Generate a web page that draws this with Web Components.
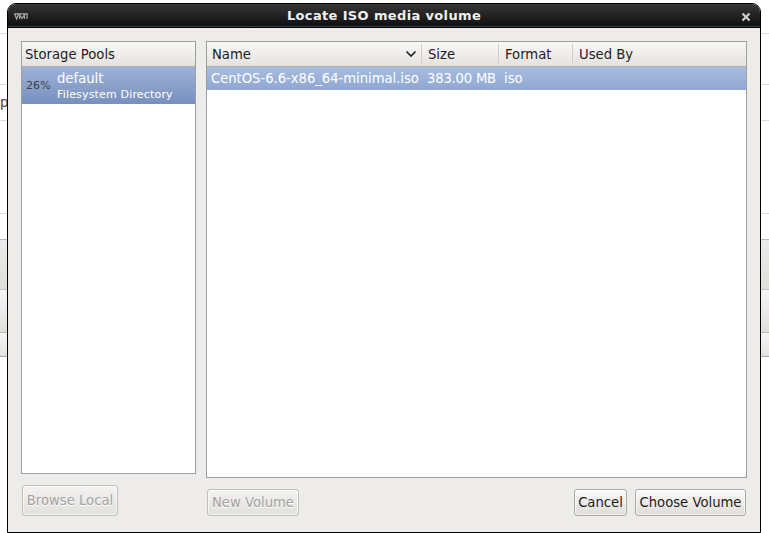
<!DOCTYPE html>
<html><head><meta charset="utf-8">
<style>
html,body{margin:0;padding:0;width:769px;height:533px;overflow:hidden;background:#fff;font-family:"DejaVu Sans",sans-serif}
</style></head><body>
<template id="t-backdrop"><style>
:host{display:block;position:absolute;inset:0;overflow:hidden;background:#fff}
i{position:absolute;left:0;right:0;height:1px;background:#dcdcda}
.b{position:absolute;left:0;right:0;box-sizing:border-box}
span{position:absolute;left:0;top:95px;font:13.2px "DejaVu Sans",sans-serif;color:#444}
</style>
<i style="top:33px"></i><i style="top:84px"></i><i style="top:120px"></i><i style="top:213px"></i>
<div class="b" style="top:239px;height:51px;border-top:1px solid #b8b8b6;border-bottom:1px solid #c4c4c2;background:linear-gradient(#ebebe9,#dfdedb)"></div>
<div class="b" style="top:290px;height:43px;border-bottom:1px solid #b8b8b6;background:linear-gradient(#f6f5f4,#e0dfdc)"></div>
<div class="b" style="top:333px;height:24px;border-bottom:1px solid #a8a8a6;background:linear-gradient(#f6f5f4,#e4e3e0)"></div>
<span>p</span></template>

<template id="t-window"><style>
:host{display:flex;flex-direction:column;position:absolute;left:7px;top:3px;width:754px;height:530px;box-sizing:border-box;border:1px solid #000;border-radius:9px 9px 0 0;background:#edecea;overflow:hidden}
.tb{flex:none;box-sizing:border-box;height:24px;display:flex;align-items:center;justify-content:center;position:relative;background:linear-gradient(#363636,#222 50%,#0e0e0e);border-bottom:1px solid #000;box-shadow:inset 0 -1px 0 #33424f;color:#f0f0f0;font:bold 13px "DejaVu Sans",sans-serif;letter-spacing:.36px}
.ic{position:absolute;left:6px;top:9px;filter:blur(.35px)}
.x{position:absolute;right:9px;top:8px}
.body{flex:1;min-height:0}
</style>
<div class="tb"><svg class="ic" width="14" height="7" viewBox="0 0 14 7"><path d="M0 .8h14M.8 1l1.8 5 1.8-5M5.5 1v5M5.5 1.5l2.5 4 2.5-4M10.5 1v5M13 1v5" stroke="#a6a6a6" stroke-width="1.2" fill="none"/></svg><slot name="title"></slot>
<svg class="x" width="10" height="10" viewBox="0 0 10 10"><path d="M1.5 1.5l7 7M8.5 1.5l-7 7" stroke="#cfcfcf" stroke-width="2.2"/></svg></div>
<div class="body"><slot></slot></div></template>

<template id="t-layout"><style>
:host{display:grid;grid-template-columns:175px 541px;column-gap:10px;padding:13px 0 0 13px;height:100%;box-sizing:border-box}
.l,.r{display:flex;flex-direction:column;min-height:0}
.l{height:433px}.r{height:437px}
.bl{padding:11px 0 0 1px}.br{padding:11px 1px 0 1px;display:flex;justify-content:space-between}
.grp{display:flex;gap:8px}
</style>
<div class="col"><div class="l"><slot name="pools"></slot></div><div class="bl"><slot name="browse"></slot></div></div>
<div class="col"><div class="r"><slot name="vols"></slot></div><div class="br"><slot name="new"></slot><div class="grp"><slot name="actions"></slot></div></div></div></template>

<template id="t-panel"><style>
:host{display:flex;flex-direction:column;height:100%;box-sizing:border-box;border:1px solid #9e9e9c;background:#fff}
</style><slot></slot></template>

<template id="t-head"><style>
:host{display:grid;flex:none;height:25px;box-sizing:border-box;background:linear-gradient(#faf9f8,#e4e2df);border-bottom:1px solid #b0afac;font:13.2px "DejaVu Sans",sans-serif;color:#1c1c1c}
</style><slot></slot></template>

<template id="t-hcell"><style>
:host{display:flex;align-items:center;justify-content:space-between;padding:0 5px 0 6px;box-sizing:border-box;position:relative;white-space:nowrap;height:24px}
:host([sep])::after{content:"";position:absolute;right:0;top:2px;bottom:3px;width:1px;background:#cfcdca}
</style><slot></slot></template>

<template id="t-pool"><style>
:host{display:flex;align-items:center;height:37px;flex:none;background:linear-gradient(#9db2d8,#7890bf);color:#fff;font:13.2px "DejaVu Sans",sans-serif;white-space:nowrap}
.pct{width:35px;padding-left:4px;box-sizing:border-box;font-size:11px;color:#3c3f46;letter-spacing:.1px}
.n{line-height:16px;margin-top:2px}
.s{font-size:11px;line-height:16px;letter-spacing:.17px}
</style><div class="pct"><slot name="pct"></slot></div><div><div class="n"><slot name="name"></slot></div><div class="s"><slot name="sub"></slot></div></div></template>

<template id="t-row"><style>
:host{display:grid;flex:none;height:23px;align-items:center;background:linear-gradient(#a8bcdf,#8fa7d2);color:#fff;font:13.2px "DejaVu Sans",sans-serif;white-space:nowrap}
</style><slot></slot></template>

<template id="t-btn"><style>
:host{display:inline-flex;align-items:center;justify-content:center;box-sizing:border-box;height:27px;border:1px solid #a9a8a5;border-radius:3px;background:linear-gradient(#fbfafa,#dfddda);font:13.2px "DejaVu Sans",sans-serif;color:#1c1c1c;white-space:nowrap;box-shadow:inset 0 0 0 1px rgba(255,255,255,.6)}
:host([disabled]){color:#a3a2a0;border-color:#c0bfbc;text-shadow:0 1px 0 #fff;background:linear-gradient(#f4f3f2,#e2e0dd)}
</style><slot></slot></template>

<x-backdrop></x-backdrop>
<x-window>
 <span slot="title">Locate ISO media volume</span>
 <x-layout>
  <x-panel slot="pools">
   <x-head style="grid-template-columns:1fr"><x-hcell style="padding-left:3px">Storage Pools</x-hcell></x-head>
   <x-pool><span slot="pct">26%</span><span slot="name">default</span><span slot="sub">Filesystem Directory</span></x-pool>
  </x-panel>
  <x-btn slot="browse" disabled style="width:96px;height:31px">Browse Local</x-btn>
  <x-panel slot="vols">
   <x-head style="grid-template-columns:215px 77px 74px 1fr">
    <x-hcell sep style="padding-left:5px">Name<svg width="12" height="8" viewBox="0 0 12 8"><path d="M1.5 1.5l4.5 4.5 4.5-4.5" stroke="#222" stroke-width="1.6" fill="none"/></svg></x-hcell>
    <x-hcell sep>Size</x-hcell><x-hcell sep>Format</x-hcell><x-hcell>Used By</x-hcell>
   </x-head>
   <x-row style="grid-template-columns:215px 77px 1fr">
    <span style="padding-left:4px;letter-spacing:-.03px">CentOS-6.6-x86_64-minimal.iso</span><span style="padding-left:5px;letter-spacing:-.2px">383.00 MB</span><span style="padding-left:5px">iso</span>
   </x-row>
  </x-panel>
  <x-btn slot="new" disabled style="width:92px">New Volume</x-btn>
  <x-btn slot="actions" style="width:53px">Cancel</x-btn>
  <x-btn slot="actions" style="width:111px">Choose Volume</x-btn>
 </x-layout>
</x-window>
<script>
for(const [tag,id] of [["x-backdrop","t-backdrop"],["x-window","t-window"],["x-layout","t-layout"],["x-panel","t-panel"],["x-head","t-head"],["x-hcell","t-hcell"],["x-pool","t-pool"],["x-row","t-row"],["x-btn","t-btn"]]){
 customElements.define(tag,class extends HTMLElement{constructor(){super();this.attachShadow({mode:"open"}).appendChild(document.getElementById(id).content.cloneNode(true));}});
}
</script>
</body></html>
